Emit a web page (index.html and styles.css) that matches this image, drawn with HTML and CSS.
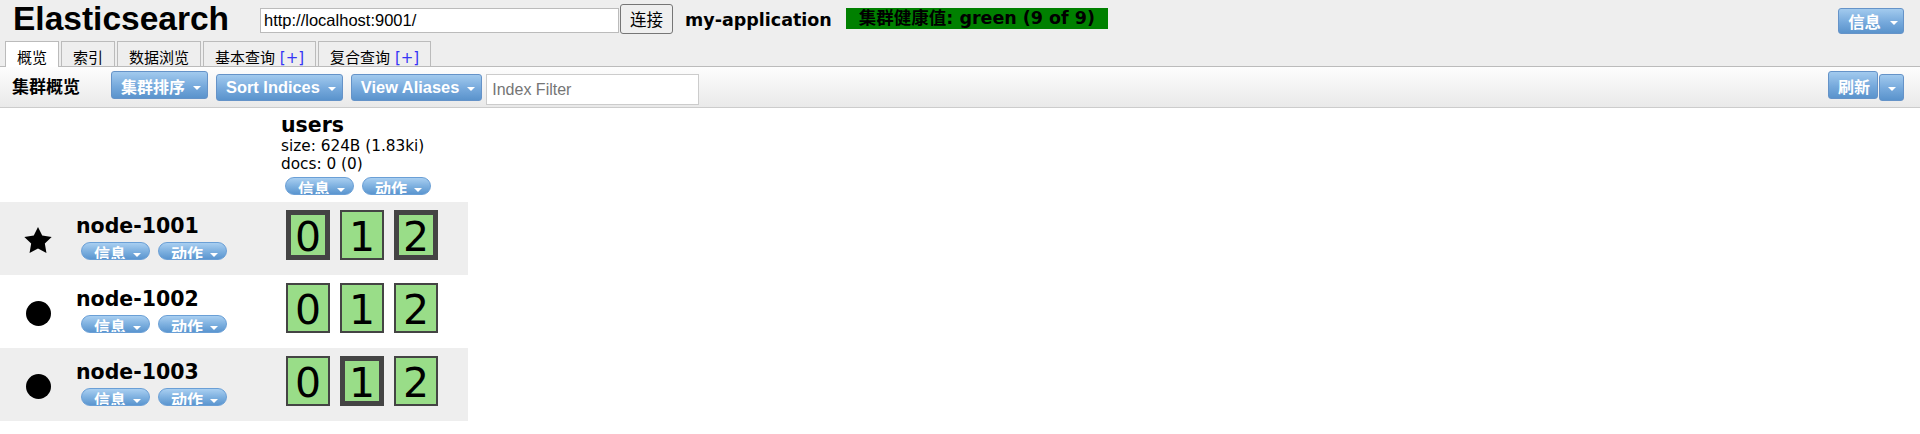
FILE: index.html
```html
<!DOCTYPE html>
<html lang="zh-CN">
<head>
<meta charset="utf-8">
<title>Elasticsearch Head</title>
<link rel="stylesheet" href="styles.css">
</head>
<body>
<div class="header">
  <div class="top">
    <h1 class="logo">Elasticsearch</h1>
    <input class="url" type="text" value="http://localhost:9001/">
    <button class="connect">连接</button>
    <span class="cluster-name">my-application</span>
    <span class="health">集群健康值: green (9 of 9)</span>
    <span class="btn cjk info-btn">信息<i class="caret"></i></span>
  </div>
  <div class="tabs">
    <div class="tab active">概览</div>
    <div class="tab">索引</div>
    <div class="tab">数据浏览</div>
    <div class="tab">基本查询 <span class="plus">[+]</span></div>
    <div class="tab">复合查询 <span class="plus">[+]</span></div>
  </div>
</div>
<div class="toolbar">
  <span class="tb-title">集群概览</span>
  <span class="btn cjk">集群排序<i class="caret"></i></span>
  <span class="btn">Sort Indices<i class="caret"></i></span>
  <span class="btn last">View Aliases<i class="caret"></i></span>
  <input class="filter" type="text" placeholder="Index Filter">
  <span class="btn cjk refresh">刷新</span>
  <span class="btn drop"><i class="caret"></i></span>
</div>
<div class="overview">
  <div class="row head-row">
    <div class="c-icon"></div>
    <div class="c-node"></div>
    <div class="c-index idx-head">
      <div class="idx-name">users</div>
      <div class="idx-meta">size: 624B (1.83ki)</div>
      <div class="idx-meta">docs: 0 (0)</div>
      <div class="pills idx-pills">
        <span class="pill">信息<i class="caret"></i></span>
        <span class="pill">动作<i class="caret"></i></span>
      </div>
    </div>
  </div>
  <div class="row node-row alt">
    <div class="c-icon">
      <svg class="star" width="28" height="26" viewBox="2 2 20 19.02"><polygon points="12,2 15.09,8.26 22,9.27 17,14.14 18.18,21.02 12,17.77 5.82,21.02 7,14.14 2,9.27 8.91,8.26" fill="#000"/></svg>
    </div>
    <div class="c-node">
      <div class="node-name">node-1001</div>
      <div class="pills">
        <span class="pill">信息<i class="caret"></i></span>
        <span class="pill">动作<i class="caret"></i></span>
      </div>
    </div>
    <div class="c-index">
      <div class="shards">
        <div class="shard primary">0</div>
        <div class="shard">1</div>
        <div class="shard primary">2</div>
      </div>
    </div>
  </div>
  <div class="row node-row">
    <div class="c-icon"><span class="dot"></span></div>
    <div class="c-node">
      <div class="node-name">node-1002</div>
      <div class="pills">
        <span class="pill">信息<i class="caret"></i></span>
        <span class="pill">动作<i class="caret"></i></span>
      </div>
    </div>
    <div class="c-index">
      <div class="shards">
        <div class="shard">0</div>
        <div class="shard">1</div>
        <div class="shard">2</div>
      </div>
    </div>
  </div>
  <div class="row node-row alt">
    <div class="c-icon"><span class="dot"></span></div>
    <div class="c-node">
      <div class="node-name">node-1003</div>
      <div class="pills">
        <span class="pill">信息<i class="caret"></i></span>
        <span class="pill">动作<i class="caret"></i></span>
      </div>
    </div>
    <div class="c-index">
      <div class="shards">
        <div class="shard">0</div>
        <div class="shard primary">1</div>
        <div class="shard">2</div>
      </div>
    </div>
  </div>
</div>
</body>
</html>
```

FILE: styles.css
```css
html, body {
  margin: 0;
  padding: 0;
}
body {
  background: #fff;
  color: #000;
  font-family: "DejaVu Sans", "Noto Sans CJK SC", sans-serif;
  font-size: 15px;
  width: 1920px;
  height: 434px;
  overflow: hidden;
}

/* ---------- header ---------- */
.header {
  background: #eee;
}
.top {
  display: flex;
  align-items: flex-start;
  height: 41px;
  padding: 0 16px 0 13px;
}
.logo {
  margin: 0;
  width: 247px;
  font: bold 33.5px/38px "Liberation Sans", "Noto Sans CJK SC", sans-serif;
}
.url {
  margin: 8px 0 0 0;
  box-sizing: border-box;
  width: 359px;
  height: 25px;
  border: 1px solid #bbb;
  padding: 0 3px;
  background: #fff;
  color: #000;
  font: 16.5px "Liberation Sans", sans-serif;
  outline: none;
}
.connect {
  margin: 4px 0 0 1px;
  box-sizing: border-box;
  width: 53px;
  height: 30px;
  padding: 0;
  border: 1px solid #767676;
  border-radius: 3px;
  background: #efefef;
  color: #000;
  font: 16.5px "Liberation Sans", "Noto Sans CJK SC", sans-serif;
}
.cluster-name {
  margin: 10px 0 0 12px;
  font-weight: bold;
  font-size: 17.5px;
  line-height: 21px;
}
.health {
  margin: 8px 0 0 14px;
  height: 21px;
  padding: 0 13px;
  background: #008000;
  font-weight: bold;
  font-size: 17.5px;
  line-height: 21px;
}

/* blue buttons */
.btn {
  display: inline-flex;
  align-items: center;
  box-sizing: border-box;
  border: 1px solid #6593c8;
  border-radius: 3px;
  background: linear-gradient(to bottom, #a2caee 0%, #76a9dc 55%, #5a93cc 100%);
  color: #fff;
  font: bold 16.4px "Liberation Sans", "Noto Sans CJK SC", sans-serif;
  padding: 0 6px 0 9px;
  white-space: nowrap;
}
.caret {
  display: inline-block;
  width: 0;
  height: 0;
  border-left: 4px solid transparent;
  border-right: 4px solid transparent;
  border-top: 4px solid #fff;
  margin-left: 8px;
  margin-top: 3px;
}
.info-btn {
  margin: 8px 0 0 auto;
  height: 26px;
  padding: 0 5px 0 9px;
}
.info-btn .caret {
  margin-left: 9px;
}

/* tabs */
.tabs {
  display: flex;
  height: 25px;
  padding-left: 4px;
  border-bottom: 1px solid #bbb;
}
.tab {
  box-sizing: border-box;
  height: 25px;
  margin: 0 1px;
  padding: 7px 11px 0;
  border: 1px solid #bbb;
  border-bottom: none;
  font-size: 15px;
  line-height: 18px;
  white-space: nowrap;
}
.tab.active {
  height: 26px;
  background: #fff;
}
.plus {
  color: #3535f5;
}

/* ---------- toolbar ---------- */
.toolbar {
  display: flex;
  align-items: flex-start;
  height: 40px;
  padding: 0 16px 0 12px;
  border-bottom: 1px solid #ccc;
  background: linear-gradient(to bottom, #fdfdfd, #e9e9e9);
}
.tb-title {
  width: 99px;
  font-weight: bold;
  font-size: 17px;
  line-height: 40px;
}
.toolbar .btn {
  margin-top: 7px;
  margin-right: 8px;
  height: 27px;
}
.toolbar .btn.cjk {
  margin-top: 4px;
  height: 28px;
  padding-top: 2px;
  font-size: 16px;
}
.toolbar .btn.last {
  margin-right: 4px;
}
.filter {
  margin-top: 7px;
  box-sizing: border-box;
  width: 213px;
  height: 31px;
  border: 1px solid #ccc;
  padding: 0 5px;
  background: #fff;
  font: 16px "Liberation Sans", sans-serif;
  outline: none;
}
.filter::placeholder {
  color: #757575;
}
.toolbar .btn.refresh {
  margin-left: auto;
  margin-right: 1px;
  padding: 2px 7px 0 9px;
}
.toolbar .btn.drop {
  width: 25px;
  margin-right: 0;
  padding: 0;
  justify-content: center;
}
.drop .caret {
  margin-left: 0;
  border-left-width: 4.5px;
  border-right-width: 4.5px;
}

/* ---------- overview ---------- */
.overview {
  width: 468px;
}
.row {
  display: flex;
}
.head-row {
  height: 94px;
}
.node-row {
  height: 73px;
}
.node-row.alt {
  background: #eee;
}
.c-icon {
  width: 76px;
  box-sizing: border-box;
  padding-top: 3px;
  display: flex;
  justify-content: center;
  align-items: center;
}
.c-node {
  width: 205px;
  box-sizing: border-box;
  padding-top: 12px;
}
.c-index {
  width: 187px;
}
.idx-head {
  box-sizing: border-box;
  padding-top: 5px;
}
.idx-name,
.node-name {
  font-weight: bold;
  font-size: 20.5px;
  line-height: 24px;
}
.idx-meta {
  font-size: 15.3px;
  line-height: 18px;
}
.dot {
  width: 25px;
  height: 25px;
  border-radius: 50%;
  background: #000;
}
.star {
  display: block;
}

/* pill buttons */
.pills {
  display: flex;
  gap: 8px;
  margin: 4px 0 0 5px;
}
.idx-pills {
  margin-left: 4px;
}
.pill {
  display: inline-flex;
  align-items: flex-start;
  box-sizing: border-box;
  height: 18px;
  overflow: hidden;
  padding: 2px 8px 0 12px;
  border: 1px solid #6a9fd6;
  border-radius: 9px;
  background: linear-gradient(to bottom, #a9cff1 0%, #7fb1e0 50%, #5b95cf 100%);
  color: #fff;
  font-weight: bold;
  font-size: 16px;
  line-height: 19px;
  white-space: nowrap;
}
.pill .caret {
  margin-left: 7px;
  margin-top: 8px;
  border-left-width: 4.5px;
  border-right-width: 4.5px;
}

/* shards */
.shards {
  display: flex;
  gap: 10px;
  padding: 8px 0 0 5px;
}
.shard {
  box-sizing: border-box;
  width: 44px;
  height: 50px;
  padding-top: 5px;
  border: 2px solid #444;
  background: #99dd88;
  display: flex;
  align-items: center;
  justify-content: center;
  font-size: 41px;
  line-height: 41px;
}
.shard.primary {
  border-width: 5px;
}
```
